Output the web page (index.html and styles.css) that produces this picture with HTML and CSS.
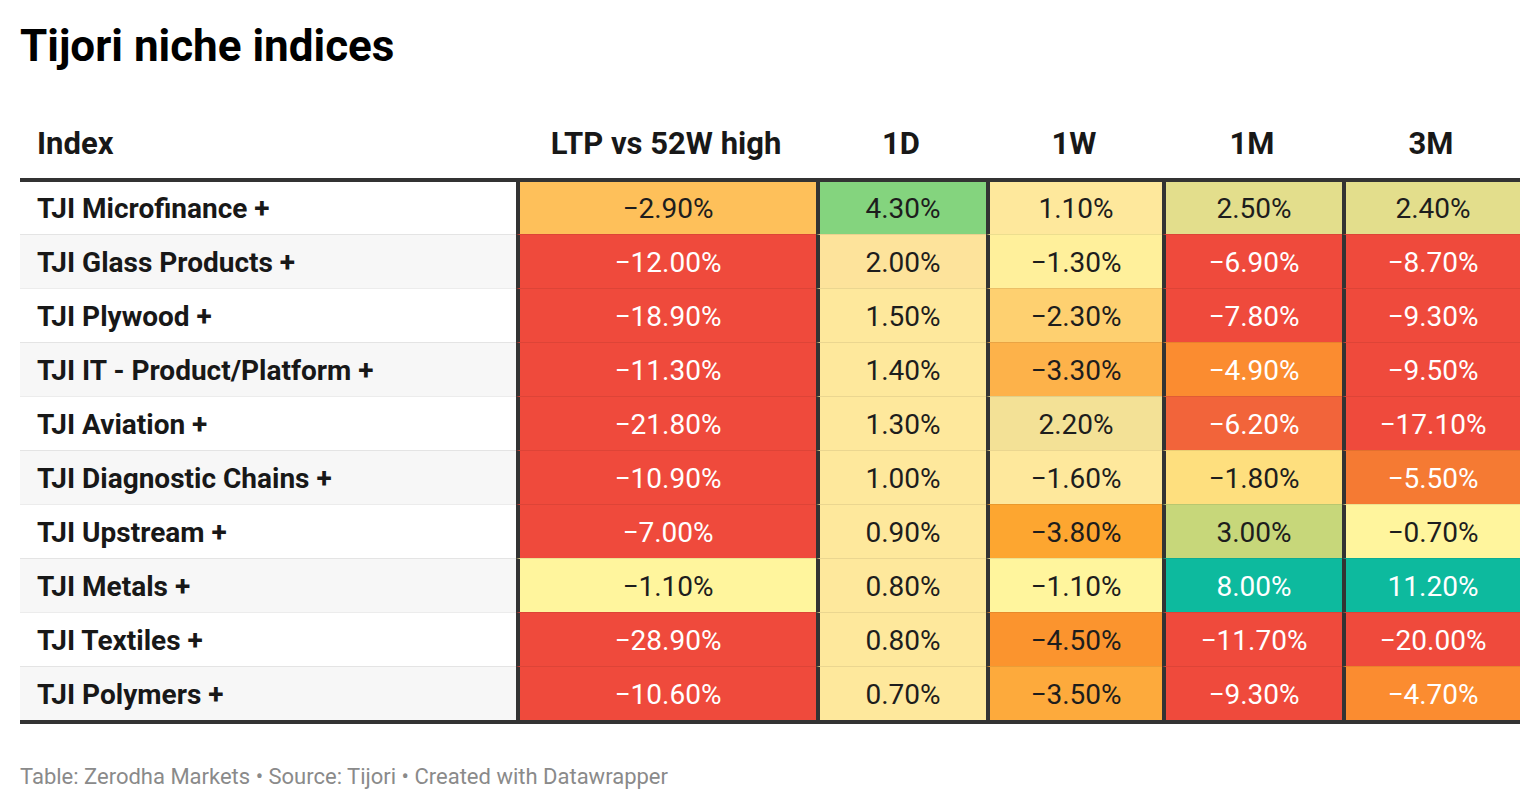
FILE: index.html
```html
<!DOCTYPE html>
<html lang="en">
<head>
<meta charset="utf-8">
<title>Tijori niche indices</title>
<link rel="stylesheet" href="styles.css">
</head>
<body>
<div class="chart">
  <h1 class="title">Tijori niche indices</h1>
  <table class="tbl">
    <colgroup>
      <col class="w-index"><col class="w-ltp"><col class="w-1d"><col class="w-1w"><col class="w-1m"><col class="w-3m">
    </colgroup>
    <thead>
      <tr>
        <th class="h-index">Index</th>
        <th>LTP vs 52W high</th>
        <th>1D</th>
        <th>1W</th>
        <th>1M</th>
        <th>3M</th>
      </tr>
    </thead>
    <tbody>
      <tr>
        <td class="name">TJI Microfinance +</td>
        <td class="c-or1">−2.90%</td>
        <td class="c-green">4.30%</td>
        <td class="c-pale">1.10%</td>
        <td class="c-khaki">2.50%</td>
        <td class="c-khaki">2.40%</td>
      </tr>
      <tr>
        <td class="name">TJI Glass Products +</td>
        <td class="c-red inv">−12.00%</td>
        <td class="c-pale2">2.00%</td>
        <td class="c-yel">−1.30%</td>
        <td class="c-red inv">−6.90%</td>
        <td class="c-red inv">−8.70%</td>
      </tr>
      <tr>
        <td class="name">TJI Plywood +</td>
        <td class="c-red inv">−18.90%</td>
        <td class="c-pale">1.50%</td>
        <td class="c-or0">−2.30%</td>
        <td class="c-red inv">−7.80%</td>
        <td class="c-red inv">−9.30%</td>
      </tr>
      <tr>
        <td class="name">TJI IT - Product/Platform +</td>
        <td class="c-red inv">−11.30%</td>
        <td class="c-pale">1.40%</td>
        <td class="c-or2">−3.30%</td>
        <td class="c-or4 inv">−4.90%</td>
        <td class="c-red inv">−9.50%</td>
      </tr>
      <tr>
        <td class="name">TJI Aviation +</td>
        <td class="c-red inv">−21.80%</td>
        <td class="c-pale">1.30%</td>
        <td class="c-sand">2.20%</td>
        <td class="c-or6 inv">−6.20%</td>
        <td class="c-red inv">−17.10%</td>
      </tr>
      <tr>
        <td class="name">TJI Diagnostic Chains +</td>
        <td class="c-red inv">−10.90%</td>
        <td class="c-pale">1.00%</td>
        <td class="c-pale">−1.60%</td>
        <td class="c-yel2">−1.80%</td>
        <td class="c-or5 inv">−5.50%</td>
      </tr>
      <tr>
        <td class="name">TJI Upstream +</td>
        <td class="c-red inv">−7.00%</td>
        <td class="c-pale">0.90%</td>
        <td class="c-or3">−3.80%</td>
        <td class="c-lime">3.00%</td>
        <td class="c-lem">−0.70%</td>
      </tr>
      <tr>
        <td class="name">TJI Metals +</td>
        <td class="c-lem">−1.10%</td>
        <td class="c-pale">0.80%</td>
        <td class="c-lem">−1.10%</td>
        <td class="c-teal inv">8.00%</td>
        <td class="c-teal inv">11.20%</td>
      </tr>
      <tr>
        <td class="name">TJI Textiles +</td>
        <td class="c-red inv">−28.90%</td>
        <td class="c-pale">0.80%</td>
        <td class="c-or45">−4.50%</td>
        <td class="c-red inv">−11.70%</td>
        <td class="c-red inv">−20.00%</td>
      </tr>
      <tr>
        <td class="name">TJI Polymers +</td>
        <td class="c-red inv">−10.60%</td>
        <td class="c-pale">0.70%</td>
        <td class="c-or35">−3.50%</td>
        <td class="c-red inv">−9.30%</td>
        <td class="c-or4 inv">−4.70%</td>
      </tr>
    </tbody>
  </table>
  <p class="footer">Table: Zerodha Markets • Source: Tijori • Created with Datawrapper</p>
</div>
</body>
</html>
```
FILE: styles.css
```css
html, body {
  margin: 0;
  padding: 0;
  background: #ffffff;
}
body {
  font-family: Roboto, "Liberation Sans", sans-serif;
  color: #1d1d1d;
}
.chart {
  padding: 19px 20px 0 20px;
  width: 1500px;
}
.title {
  margin: 0;
  font-size: 44px;
  line-height: 55px;
  font-weight: 700;
  color: #000000;
  letter-spacing: 0;
}
.tbl {
  margin-top: 41px;
  width: 1500px;
  table-layout: fixed;
  border-collapse: separate;
  border-spacing: 0;
}
.w-index { width: 496px; }
.w-ltp { width: 300px; }
.w-1d { width: 170px; }
.w-1w { width: 176px; }
.w-1m { width: 180px; }
.w-3m { width: 178px; }

.tbl th {
  box-sizing: border-box;
  font-size: 31px;
  line-height: 36px;
  font-weight: 700;
  color: #181818;
  text-align: center;
  padding: 11px 0 16px 0;
  border-bottom: 4px solid #333333;
  vertical-align: bottom;
}
.tbl th.h-index {
  text-align: left;
  padding-left: 17px;
}
.tbl td {
  box-sizing: border-box;
  height: 54px;
  padding: 2px 0 0 0;
  font-size: 28px;
  line-height: 32px;
  text-align: center;
  vertical-align: middle;
  border-top: 1px solid rgba(0, 0, 0, 0.075);
  border-left: 4px solid #333333;
  color: #1d1d1d;
}
.tbl tbody tr:first-child td {
  height: 52px;
  border-top: 0;
}
.tbl tbody tr:last-child td {
  border-bottom: 4px solid #333333;
  height: 58px;
}
.tbl td.name {
  border-left: 0;
  text-align: left;
  padding-left: 17px;
  font-weight: 700;
  color: #181818;
  background: #ffffff;
}
.tbl tbody tr:nth-child(even) td.name {
  background: #f7f7f7;
}
.tbl td.inv { color: #ffffff; }

.c-red { background: #ef4a3c; }
.c-or0 { background: #fed070; }
.c-or1 { background: #fec05a; }
.c-or2 { background: #fdb24a; }
.c-or35 { background: #fdaa3c; }
.c-or3 { background: #fda630; }
.c-or45 { background: #fb942e; }
.c-or4 { background: #fb8c30; }
.c-or5 { background: #f57a33; }
.c-or6 { background: #f2643a; }
.c-green { background: #84d47e; }
.c-teal { background: #0dba9e; }
.c-lime { background: #c7d77a; }
.c-khaki { background: #e3de8c; }
.c-sand { background: #f3e196; }
.c-pale { background: #fee89c; }
.c-pale2 { background: #fde39b; }
.c-yel { background: #fff09b; }
.c-yel2 { background: #fedf7e; }
.c-lem { background: #fff59d; }

.footer {
  margin: 40px 0 0 0;
  font-size: 22px;
  line-height: 26px;
  color: #8a8a8a;
}
```
